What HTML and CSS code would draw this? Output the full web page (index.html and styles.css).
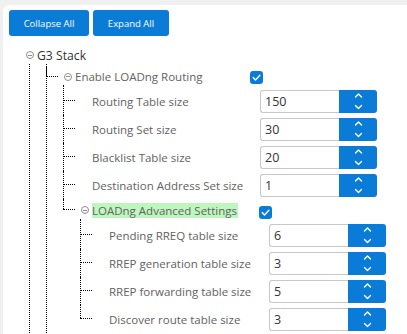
FILE: index.html
```html
<!DOCTYPE html>
<html>
<head>
<meta charset="utf-8">
<link rel="stylesheet" href="styles.css">
</head>
<body>
<div class="panel">
  <div class="toolbar">
    <button class="btn btn-collapse">Collapse All</button>
    <button class="btn btn-expand">Expand All</button>
  </div>
  <ul class="tree">
    <li class="root">
      <div class="row row-root"><span class="slot"><span class="toggle"></span></span><span class="label">G3 Stack</span></div>
      <ul class="children lvl1">
        <li class="more">
          <div class="row row-head1"><span class="slot"><span class="toggle"></span></span><span class="label">Enable LOADng Routing</span><span class="check"><svg viewBox="0 0 13 13" width="13" height="13"><path d="M3.2 6.6 L5.5 8.9 L9.9 4.3" fill="none" stroke="#fff" stroke-width="1.4" stroke-linecap="round" stroke-linejoin="round"/></svg></span></div>
          <ul class="children lvl2">
            <li class="leaf">
              <div class="row row-spin"><span class="slot"></span><span class="label">Routing Table size</span><div class="spin"><input class="spin-input" value="150"><span class="spin-btn"><svg viewBox="0 0 38 23" width="38" height="23"><path d="M16.5 7 L19.5 4 L22.5 7 M16.5 15.5 L19.5 18.5 L22.5 15.5" fill="none" stroke="#fff" stroke-width="1.4" stroke-linecap="round" stroke-linejoin="round"/></svg></span></div></div>
            </li>
            <li class="leaf">
              <div class="row row-spin"><span class="slot"></span><span class="label">Routing Set size</span><div class="spin"><input class="spin-input" value="30"><span class="spin-btn"><svg viewBox="0 0 38 23" width="38" height="23"><path d="M16.5 7 L19.5 4 L22.5 7 M16.5 15.5 L19.5 18.5 L22.5 15.5" fill="none" stroke="#fff" stroke-width="1.4" stroke-linecap="round" stroke-linejoin="round"/></svg></span></div></div>
            </li>
            <li class="leaf">
              <div class="row row-spin"><span class="slot"></span><span class="label">Blacklist Table size</span><div class="spin"><input class="spin-input" value="20"><span class="spin-btn"><svg viewBox="0 0 38 23" width="38" height="23"><path d="M16.5 7 L19.5 4 L22.5 7 M16.5 15.5 L19.5 18.5 L22.5 15.5" fill="none" stroke="#fff" stroke-width="1.4" stroke-linecap="round" stroke-linejoin="round"/></svg></span></div></div>
            </li>
            <li class="leaf">
              <div class="row row-spin"><span class="slot"></span><span class="label">Destination Address Set size</span><div class="spin"><input class="spin-input" value="1"><span class="spin-btn"><svg viewBox="0 0 38 23" width="38" height="23"><path d="M16.5 7 L19.5 4 L22.5 7 M16.5 15.5 L19.5 18.5 L22.5 15.5" fill="none" stroke="#fff" stroke-width="1.4" stroke-linecap="round" stroke-linejoin="round"/></svg></span></div></div>
            </li>
            <li class="node">
              <div class="row row-head2"><span class="slot"><span class="toggle"></span></span><span class="label"><span class="hl">LOADng Advanced Settings</span></span><span class="check"><svg viewBox="0 0 13 13" width="13" height="13"><path d="M3.2 6.6 L5.5 8.9 L9.9 4.3" fill="none" stroke="#fff" stroke-width="1.4" stroke-linecap="round" stroke-linejoin="round"/></svg></span></div>
              <ul class="children lvl3">
                <li class="leaf">
                  <div class="row row-spin"><span class="slot"></span><span class="label">Pending RREQ table size</span><div class="spin"><input class="spin-input" value="6"><span class="spin-btn"><svg viewBox="0 0 38 23" width="38" height="23"><path d="M16.5 7 L19.5 4 L22.5 7 M16.5 15.5 L19.5 18.5 L22.5 15.5" fill="none" stroke="#fff" stroke-width="1.4" stroke-linecap="round" stroke-linejoin="round"/></svg></span></div></div>
                </li>
                <li class="leaf">
                  <div class="row row-spin"><span class="slot"></span><span class="label">RREP generation table size</span><div class="spin"><input class="spin-input" value="3"><span class="spin-btn"><svg viewBox="0 0 38 23" width="38" height="23"><path d="M16.5 7 L19.5 4 L22.5 7 M16.5 15.5 L19.5 18.5 L22.5 15.5" fill="none" stroke="#fff" stroke-width="1.4" stroke-linecap="round" stroke-linejoin="round"/></svg></span></div></div>
                </li>
                <li class="leaf">
                  <div class="row row-spin"><span class="slot"></span><span class="label">RREP forwarding table size</span><div class="spin"><input class="spin-input" value="5"><span class="spin-btn"><svg viewBox="0 0 38 23" width="38" height="23"><path d="M16.5 7 L19.5 4 L22.5 7 M16.5 15.5 L19.5 18.5 L22.5 15.5" fill="none" stroke="#fff" stroke-width="1.4" stroke-linecap="round" stroke-linejoin="round"/></svg></span></div></div>
                </li>
                <li class="leaf">
                  <div class="row row-spin"><span class="slot"></span><span class="label">Discover route table size</span><div class="spin"><input class="spin-input" value="3"><span class="spin-btn"><svg viewBox="0 0 38 23" width="38" height="23"><path d="M16.5 7 L19.5 4 L22.5 7 M16.5 15.5 L19.5 18.5 L22.5 15.5" fill="none" stroke="#fff" stroke-width="1.4" stroke-linecap="round" stroke-linejoin="round"/></svg></span></div></div>
                </li>
              </ul>
            </li>
          </ul>
        </li>
      </ul>
    </li>
  </ul>
</div>
</body>
</html>
```

FILE: styles.css
```css
* { box-sizing: border-box; }
html, body { margin: 0; height: 100%; }
body {
  background: #f0f0f0;
  font-family: "Open Sans", "Noto Sans", sans-serif;
  overflow: hidden;
}
.panel {
  margin: 5px 0 0 3px;
  height: calc(100% - 5px);
  background: #fff;
  border-top-left-radius: 6px;
  padding: 5px 0 0 6px;
  overflow: hidden;
}
.toolbar { display: flex; gap: 4px; }
.btn {
  height: 26px;
  border: 0;
  border-radius: 3px;
  background: #0b7bd8;
  color: #fff;
  font-family: "Open Sans", sans-serif;
  font-size: 9.5px;
  padding: 0;
}
.btn-collapse { width: 80px; }
.btn-expand { width: 76px; }

ul { list-style: none; margin: 0; padding: 0; }
.tree { margin: 8px 0 0 -1px; }
.lvl1 { padding-left: 38px; }
.lvl2, .lvl3 { padding-left: 17px; }
li { position: relative; }

.row {
  position: relative;
  display: flex;
  align-items: center;
  padding-left: 17px;
}
.row-root { height: 22px; }
.row-head1 { height: 21px; }
.row-head2 { height: 22px; }
.row-spin { height: 28px; }

.slot { width: 12px; flex: none; display: flex; align-items: center; }
.toggle {
  position: relative;
  width: 8px;
  height: 8px;
  margin-left: 1px;
  border: 1px solid #8e8e8e;
  border-radius: 50%;
}
.toggle::after {
  content: "";
  position: absolute;
  left: 1px;
  right: 1px;
  top: 2.5px;
  height: 1px;
  background: #8e8e8e;
}
.label {
  flex: none;
  font-size: 11.5px;
  color: #626262;
  white-space: nowrap;
}
.row-root .label { color: #333; font-size: 12.2px; }
.row-head1 .label { width: 175px; }
.lvl2 > .leaf > .row .label { width: 168px; }
.row-head2 .label { width: 167px; }
.lvl3 > .leaf > .row .label { width: 160px; }
.hl { background: #bff6bf; padding: 0 1px 0 0; }

.check {
  width: 13px;
  height: 13px;
  border-radius: 3px;
  background: #0b7bd8;
  display: flex;
}
.row-head1 .check { margin-top: 2px; }
.row-head2 .check { margin-top: 5px; }

.spin { display: flex; height: 23px; }
.spin-input {
  width: 79px;
  height: 23px;
  margin: 0;
  border: 1px solid #c8c8c8;
  border-right: 0;
  border-radius: 3px 0 0 3px;
  padding: 0 4px;
  font-family: "Open Sans", sans-serif;
  font-size: 12.5px;
  color: #333;
  background: #fff;
}
.spin-btn {
  width: 38px;
  height: 23px;
  background: #0b7bd8;
  border-radius: 0 3px 3px 0;
  display: flex;
}

/* tree connector lines */
.children > li > .row::before {
  content: "";
  position: absolute;
  left: 0;
  top: calc(50% - 1px);
  width: 12px;
  border-top: 1px dotted #000;
}
.children > li:not(:last-child)::before,
.children > li.more::before {
  content: "";
  position: absolute;
  left: 0;
  top: 0;
  bottom: 0;
  border-left: 1px dotted #000;
}
.children > li:first-child::before { top: -2px; }
.children > li.more::before { bottom: -60px; }
.children > li:last-child > .row::after {
  content: "";
  position: absolute;
  left: 0;
  top: 0;
  height: calc(50% - 1px);
  border-left: 1px dotted #000;
}
.root::before {
  content: "";
  position: absolute;
  left: 21px;
  top: 20px;
  bottom: -60px;
  border-left: 1px dotted #000;
}
```
